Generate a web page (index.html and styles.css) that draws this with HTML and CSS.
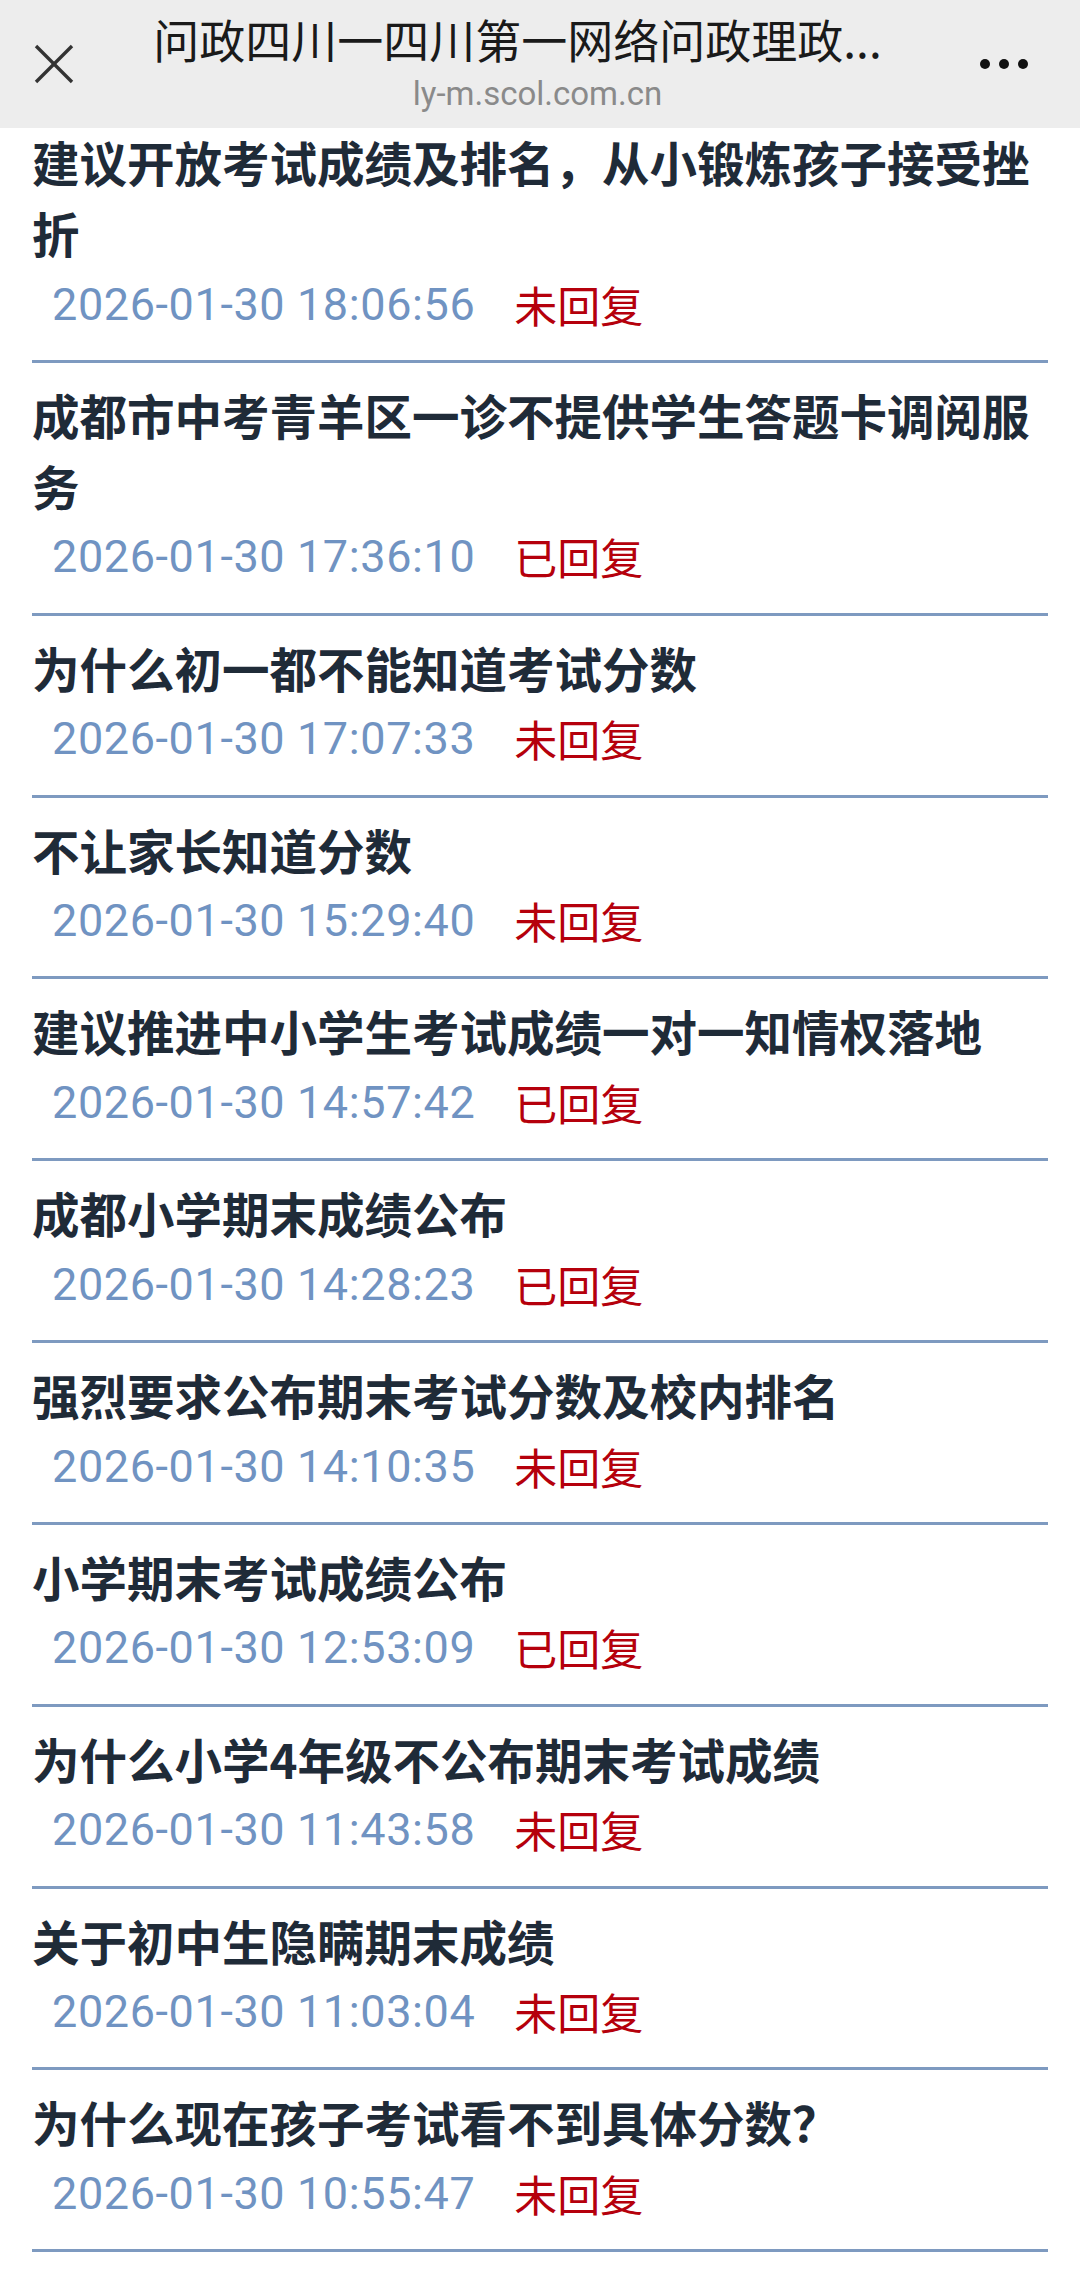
FILE: index.html
```html
<!DOCTYPE html>
<html lang="zh-CN">
<head>
    <meta charset="UTF-8">
    <meta name="viewport" content="width=device-width, initial-scale=1.0">
    <title>问政四川一四川第一网络问政理政平台</title>
    <link rel="stylesheet" href="styles.css">
</head>
<body>
    <header class="topbar">
        <div class="close">
            <svg width="40" height="40" viewBox="0 0 40 40">
                <line x1="2" y1="2" x2="38" y2="38" stroke="#333" stroke-width="3.4" />
                <line x1="38" y1="2" x2="2" y2="38" stroke="#333" stroke-width="3.4" />
            </svg>
        </div>
        <div class="heading">
            <div class="heading-title">问政四川一四川第一网络问政理政...</div>
            <div class="heading-url">ly-m.scol.com.cn</div>
        </div>
        <div class="more">
            <span class="dot"></span>
            <span class="dot"></span>
            <span class="dot"></span>
        </div>
    </header>

    <ul class="list">
        <li class="item">
            <div class="item-title">建议开放考试成绩及排名，从小锻炼孩子接受挫折</div>
            <div class="meta"><span class="date">2026-01-30 18:06:56</span><span class="status">未回复</span></div>
        </li>
        <li class="item">
            <div class="item-title">成都市中考青羊区一诊不提供学生答题卡调阅服务</div>
            <div class="meta"><span class="date">2026-01-30 17:36:10</span><span class="status">已回复</span></div>
        </li>
        <li class="item">
            <div class="item-title">为什么初一都不能知道考试分数</div>
            <div class="meta"><span class="date">2026-01-30 17:07:33</span><span class="status">未回复</span></div>
        </li>
        <li class="item">
            <div class="item-title">不让家长知道分数</div>
            <div class="meta"><span class="date">2026-01-30 15:29:40</span><span class="status">未回复</span></div>
        </li>
        <li class="item">
            <div class="item-title">建议推进中小学生考试成绩一对一知情权落地</div>
            <div class="meta"><span class="date">2026-01-30 14:57:42</span><span class="status">已回复</span></div>
        </li>
        <li class="item">
            <div class="item-title">成都小学期末成绩公布</div>
            <div class="meta"><span class="date">2026-01-30 14:28:23</span><span class="status">已回复</span></div>
        </li>
        <li class="item">
            <div class="item-title">强烈要求公布期末考试分数及校内排名</div>
            <div class="meta"><span class="date">2026-01-30 14:10:35</span><span class="status">未回复</span></div>
        </li>
        <li class="item">
            <div class="item-title">小学期末考试成绩公布</div>
            <div class="meta"><span class="date">2026-01-30 12:53:09</span><span class="status">已回复</span></div>
        </li>
        <li class="item">
            <div class="item-title">为什么小学4年级不公布期末考试成绩</div>
            <div class="meta"><span class="date">2026-01-30 11:43:58</span><span class="status">未回复</span></div>
        </li>
        <li class="item">
            <div class="item-title">关于初中生隐瞒期末成绩</div>
            <div class="meta"><span class="date">2026-01-30 11:03:04</span><span class="status">未回复</span></div>
        </li>
        <li class="item">
            <div class="item-title">为什么现在孩子考试看不到具体分数？</div>
            <div class="meta"><span class="date">2026-01-30 10:55:47</span><span class="status">未回复</span></div>
        </li>
    </ul>
</body>
</html>
```

FILE: styles.css
```css
body {
    margin: 0;
    background-color: #fff;
    font-family: "Noto Sans CJK SC", "Noto Sans", sans-serif;
}

.topbar {
    position: relative;
    z-index: 1;
    display: flex;
    align-items: center;
    height: 128px;
    background-color: #ededed;
}

.close {
    width: 107px;
    display: flex;
    justify-content: center;
}

.heading {
    flex: 1;
    min-width: 0;
    padding-bottom: 2px;
    text-align: center;
}

.heading-title {
    font-size: 46px;
    line-height: 52px;
    color: #1a1a1a;
    white-space: nowrap;
}

.heading-url {
    margin-top: 10px;
    padding-left: 40px;
    font-family: Roboto, sans-serif;
    font-size: 33px;
    line-height: 40px;
    color: #8a8a8a;
}

.more {
    width: 152px;
    display: flex;
    justify-content: center;
    gap: 9px;
}

.dot {
    width: 10px;
    height: 10px;
    border-radius: 50%;
    background-color: #111;
}

.list {
    list-style: none;
    margin: -2px 0 0;
    padding: 0 32px;
}

.item {
    padding: 16px 0 19.85px;
    border-bottom: 3px solid #7e9ac0;
}

.item:first-child {
    padding-top: 0;
}

.item-title {
    font-size: 47.5px;
    font-weight: 700;
    line-height: 71px;
    color: #1f2b38;
}

.meta {
    display: flex;
    align-items: center;
    height: 72px;
    padding-left: 20px;
}

.date {
    font-family: Roboto, sans-serif;
    font-size: 45px;
    letter-spacing: 0.6px;
    line-height: 1;
    color: #7093c2;
}

.status {
    margin-left: 39px;
    font-size: 43px;
    line-height: 1;
    color: #b5000c;
}
```
